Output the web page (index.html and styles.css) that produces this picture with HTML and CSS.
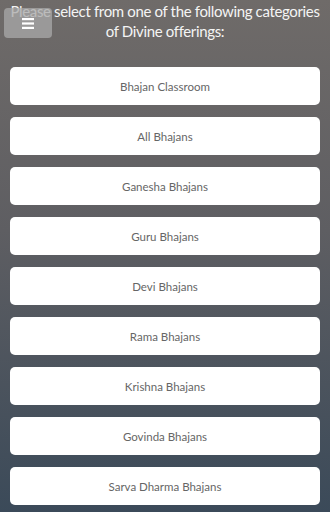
FILE: index.html
```html
<!DOCTYPE html>
<html>
<head>
<meta charset="utf-8">
<link rel="stylesheet" href="styles.css">
</head>
<body>
<div class="page">
  <p class="intro">Please select from one of the following categories of Divine offerings:</p>
  <button class="menu" aria-label="Menu">
    <svg width="12" height="11" viewBox="0 0 12 11"><rect x="0" y="0" width="12" height="2.2" fill="#fff"/><rect x="0" y="4.4" width="12" height="2.2" fill="#fff"/><rect x="0" y="8.8" width="12" height="2.2" fill="#fff"/></svg>
  </button>
  <div class="list">
    <a class="item">Bhajan Classroom</a>
    <a class="item">All Bhajans</a>
    <a class="item">Ganesha Bhajans</a>
    <a class="item">Guru Bhajans</a>
    <a class="item">Devi Bhajans</a>
    <a class="item">Rama Bhajans</a>
    <a class="item">Krishna Bhajans</a>
    <a class="item">Govinda Bhajans</a>
    <a class="item">Sarva Dharma Bhajans</a>
  </div>
</div>
</body>
</html>
```
FILE: styles.css
```css
html, body {
  margin: 0;
  padding: 0;
  height: 100%;
}
body {
  background: linear-gradient(to bottom, #6f6b69 0%, #5e5e62 45%, #3b4a59 100%);
  font-family: Lato, "Open Sans", sans-serif;
  overflow: hidden;
}
.page {
  position: relative;
  padding: 0 10px;
}
.intro {
  margin: 0 -6px;
  padding-top: 1px;
  color: #f4f4f4;
  font-size: 15px;
  letter-spacing: -0.35px;
  line-height: 20px;
  text-align: center;
}
.menu {
  position: absolute;
  left: 4px;
  top: 8px;
  width: 48px;
  height: 30px;
  border: none;
  border-radius: 4px;
  background: rgba(170, 170, 170, 0.75);
  display: flex;
  align-items: center;
  justify-content: center;
  padding: 0;
}
.list {
  margin-top: 26px;
  display: flex;
  flex-direction: column;
  gap: 12px;
}
.item {
  display: flex;
  align-items: center;
  justify-content: center;
  height: 38px;
  background: #fff;
  border-radius: 5px;
  color: #666;
  font-size: 11.5px;
}
```
